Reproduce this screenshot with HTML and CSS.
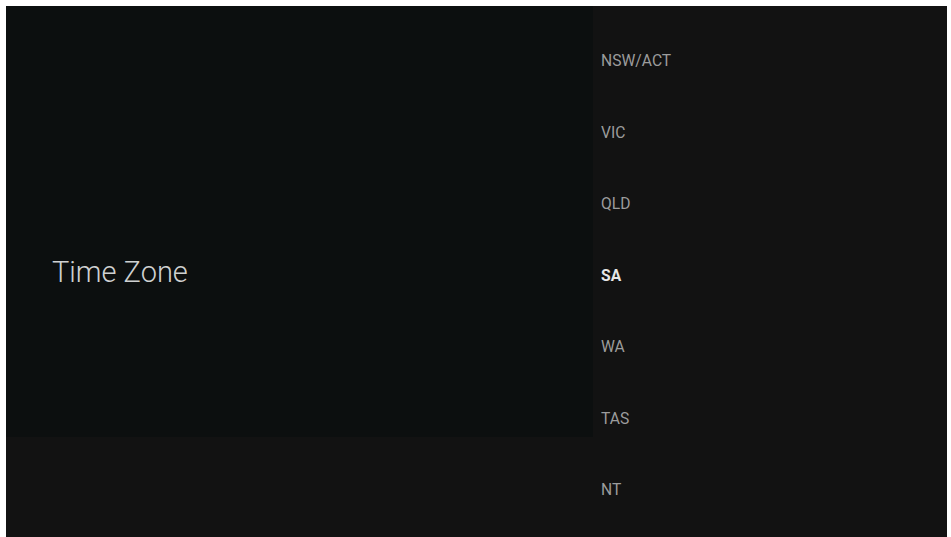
FILE: index.html
```html
<!DOCTYPE html>
<html>
<head>
<meta charset="utf-8">
<link rel="stylesheet" href="styles.css">
</head>
<body>
<div class="screen">
  <div class="side">
    <div class="title">Time Zone</div>
  </div>
  <ul class="zones">
    <li class="zone">NSW/ACT</li>
    <li class="zone">VIC</li>
    <li class="zone">QLD</li>
    <li class="zone zone-active">SA</li>
    <li class="zone">WA</li>
    <li class="zone">TAS</li>
    <li class="zone">NT</li>
  </ul>
</div>
</body>
</html>
```
FILE: styles.css
```css
html, body {
  margin: 0;
  padding: 0;
  background: #ffffff;
}

.screen {
  margin: 6px 4px 0 6px;
  height: 531px;
  background: #121212;
  display: flex;
  align-items: flex-start;
  overflow: hidden;
}

.side {
  width: 587px;
  height: 431px;
  background: #0c0f0f;
  flex: none;
  box-sizing: border-box;
  padding: 249px 0 0 46px;
}

.title {
  font-family: Roboto, "Liberation Sans", sans-serif;
  font-weight: 300;
  font-size: 29px;
  line-height: 34px;
  color: #cfd1d1;
}

.zones {
  list-style: none;
  margin: 0;
  padding: 44px 0 0 8px;
  display: flex;
  flex-direction: column;
}

.zone {
  font-family: Roboto, "Liberation Sans", sans-serif;
  font-size: 17px;
  line-height: 20px;
  height: 71.5px;
  color: #9c9c9c;
  transform: scaleX(0.92);
  transform-origin: left center;
}

.zone-active {
  color: #e6e6e6;
  font-weight: 700;
}
```
